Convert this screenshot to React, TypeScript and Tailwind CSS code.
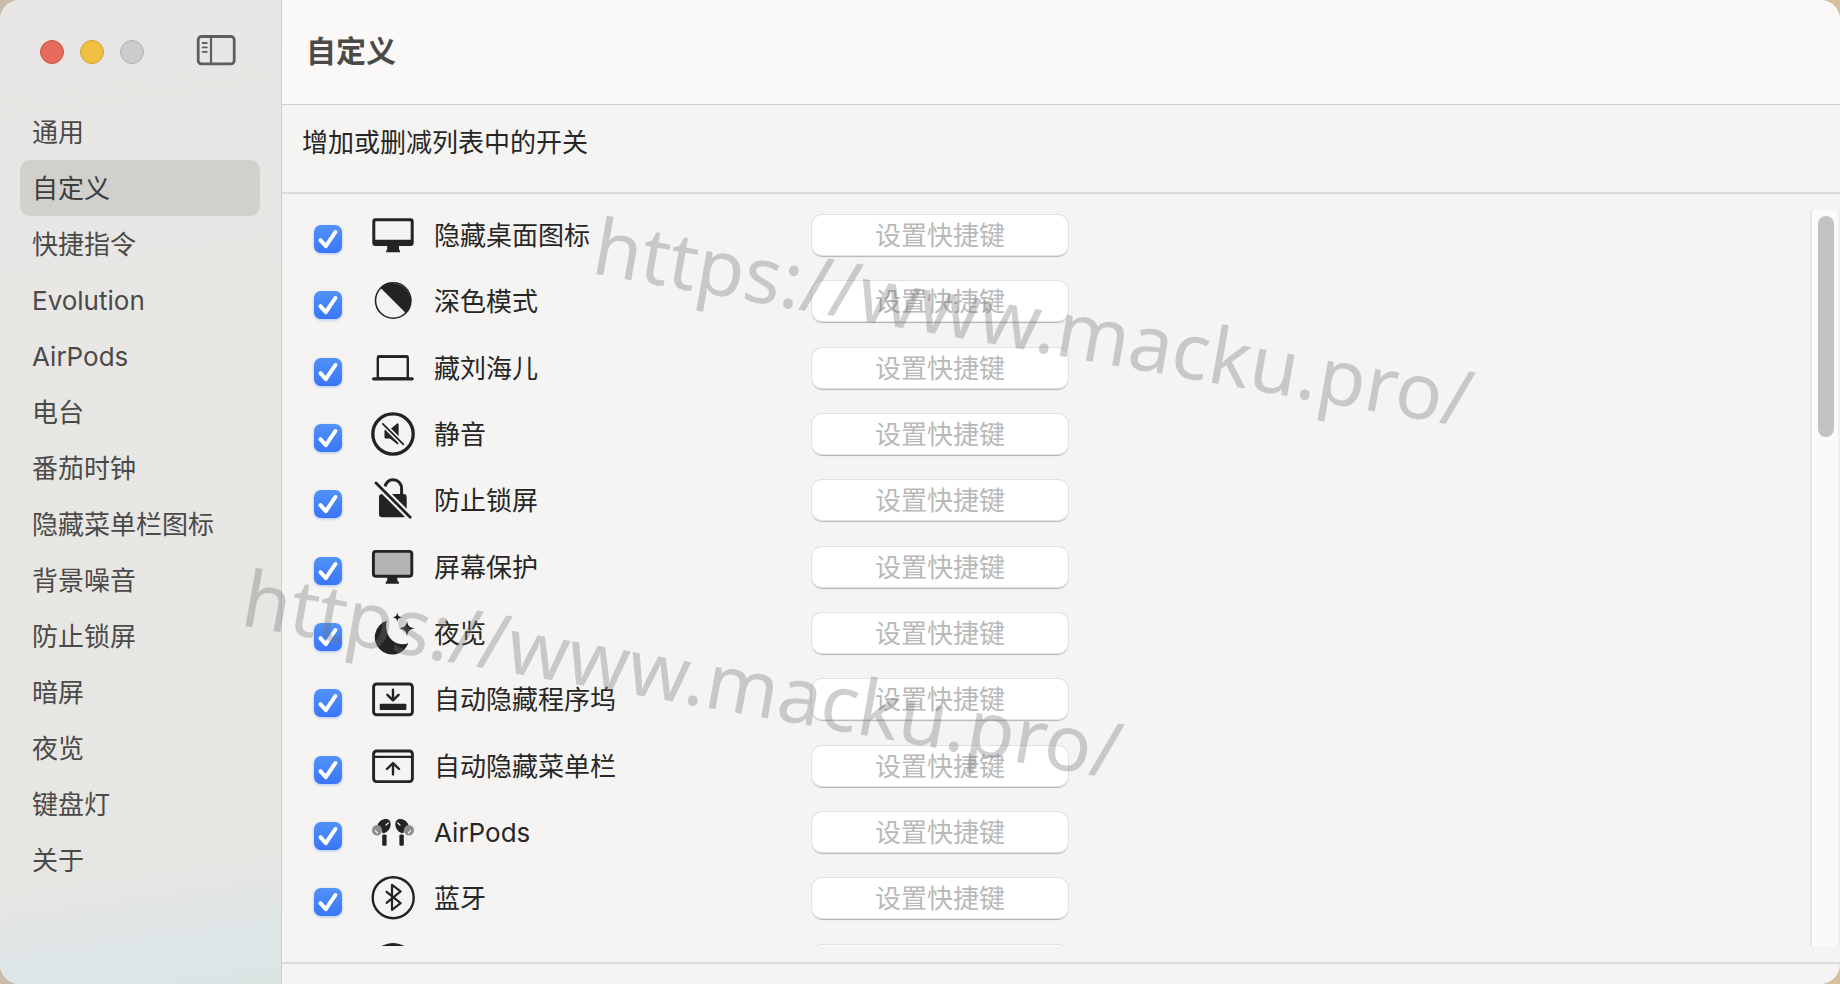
import React, { useState } from 'react';

interface SwitchRow {
  id: string;
  name: string;
  icon: React.FC;
}

const INK = '#232322';
const PAPER = '#f5f4f2';

const Glyph: React.FC<{ children: React.ReactNode }> = ({ children }) => (
  <svg viewBox="0 0 44 44" width={44} height={44} fill="none" className="shrink-0" aria-hidden="true">
    {children}
  </svg>
);

const DesktopIcon: React.FC = () => (
  <Glyph>
    <path
      fill={INK}
      fillRule="evenodd"
      d="M4.5 5.3h35a3.2 3.2 0 0 1 3.2 3.2v21.3a3.2 3.2 0 0 1-3.2 3.2H28v3.6l1 1.2v1.5H15.2v-1.5l1-1.2V33H4.5a3.2 3.2 0 0 1-3.2-3.2V8.5a3.2 3.2 0 0 1 3.2-3.2zM5.2 8.2a.9.9 0 0 0-.9.9v17.6h35.4V9.100a.9.9 0 0 0-.9-.9z"
    />
  </Glyph>
);

const DarkModeIcon: React.FC = () => (
  <Glyph>
    <circle cx="22.2" cy="21.5" r="17.7" stroke={INK} strokeWidth="1.6" />
    <path fill={INK} d="M9.2 8.6A18.4 18.4 0 0 1 35.2 34.500z" />
  </Glyph>
);

const LaptopIcon: React.FC = () => (
  <Glyph>
    <rect x="6.800" y="10.4" width="30" height="22" rx="2" stroke={INK} strokeWidth="2.4" />
    <path d="M7.500 10.600h28.600" stroke={INK} strokeWidth="2.800" strokeLinecap="round" />
    <rect x="1" y="31.2" width="41.800" height="3.2" rx="1.6" fill={INK} />
  </Glyph>
);

const MuteIcon: React.FC = () => (
  <Glyph>
    <circle cx="22" cy="22" r="20.2" stroke={INK} strokeWidth="3.3" />
    <path
      fill={INK}
      stroke={INK}
      strokeLinejoin="round"
      d="M14 18h5l7.300-6.200a.6.6 0 0 1 .8.6v18.800a.6.6 0 0 1-.8.6L19 26h-5z"
    />
    <path d="m11 11 22 22" stroke={PAPER} strokeWidth="5" />
    <path d="m11.800 11.800 20.600 20.600" stroke={INK} strokeWidth="1.800" strokeLinecap="round" />
  </Glyph>
);

const LockSlashIcon: React.FC = () => (
  <Glyph>
    <path d="M14 8.5C15.200 4.200 18 1.700 22 1.700c5 0 8.600 3.600 8.600 9V17" stroke={INK} strokeWidth="3" />
    <rect x="8" y="16" width="27.700" height="23.300" rx="3.200" fill={INK} />
    <path d="m4 4 37 37" stroke={PAPER} strokeWidth="7" />
    <path d="m5 5 34.200 34.200" stroke={INK} strokeWidth="2.800" strokeLinecap="round" />
  </Glyph>
);

const ScreenSaverIcon: React.FC = () => (
  <Glyph>
    <rect x="2.400" y="6.400" width="38.400" height="24.800" rx="2.400" fill="#b4b4b3" stroke={INK} strokeWidth="2.900" />
    <path fill={INK} d="M16.300 32h10v3.500l1.600 1.500v1.800H14.700V37l1.600-1.500z" />
  </Glyph>
);

const NightIcon: React.FC = () => (
  <Glyph>
    <path
      fill={INK}
      d="M15.700 9.800A17.300 17.300 0 1 0 37.400 32C33 34.200 27 33.600 22 30c-6.200-4.800-7.800-13-6.300-20.200z"
    />
    <path fill={INK} d="M26.300 1.300c.5 3.500 1.400 4.500 5 5-3.600.5-4.500 1.500-5 5-.5-3.500-1.400-4.500-5-5 3.600-.5 4.500-1.500 5-5z" />
    <path fill={INK} d="M36 9.500c.8 5.800 2.300 7 8 7.900-5.700.9-7.200 2.200-8 8-.8-5.800-2.300-7.100-8-8 5.700-.9 7.200-2.100 8-7.900z" />
  </Glyph>
);

const DockIcon: React.FC = () => (
  <Glyph>
    <rect x="2.600" y="7" width="38.800" height="30.800" rx="3" stroke={INK} strokeWidth="2.900" />
    <rect x="8.700" y="26.700" width="26.700" height="6.200" rx="1" fill={INK} />
    <path
      d="M22 12.600v10.600M16.400 17.800l5.600 5.600 5.600-5.600"
      stroke={INK}
      strokeWidth="2.400"
      strokeLinecap="round"
      strokeLinejoin="round"
    />
  </Glyph>
);

const MenuBarIcon: React.FC = () => (
  <Glyph>
    <rect x="2.600" y="7" width="38.800" height="30.600" rx="3" stroke={INK} strokeWidth="2.900" />
    <path d="M3 12.800h38" stroke={INK} strokeWidth="2.200" />
    <path
      d="M22 30.400V19.200M16 25l6-6 6 6"
      stroke={INK}
      strokeWidth="2.400"
      strokeLinecap="round"
      strokeLinejoin="round"
    />
  </Glyph>
);

const Bud: React.FC = () => (
  <>
    <path
      fill={INK}
      d="M6.500 15C8 11 11.500 9 15 9c3.200 0 5 2.400 4.600 6-.5 4.500-3.600 8.200-8 8.200-.6-4-2.200-6.600-5.100-8.200z"
    />
    <rect x="11.200" y="24.500" width="4.400" height="11.300" rx="1.300" fill={INK} />
    <ellipse cx="6" cy="20.300" rx="5" ry="5.200" fill="#8d8d8b" />
    <path d="m4.300 20.600 2.200 2.400" stroke={PAPER} strokeWidth="1.200" strokeLinecap="round" />
    <path d="m15 15 2.300-2" stroke={PAPER} strokeWidth="1.200" strokeLinecap="round" />
  </>
);

const AirPodsIcon: React.FC = () => (
  <Glyph>
    <Bud />
    <g transform="translate(44 0) scale(-1 1)">
      <Bud />
    </g>
  </Glyph>
);

const BluetoothIcon: React.FC = () => (
  <Glyph>
    <circle cx="22.200" cy="21.700" r="20.500" stroke={INK} strokeWidth="2.400" />
    <path
      d="m15.600 15.800 14 11.400-8.600 6.600V8.900l8.600 6.500-14 11.400"
      stroke={INK}
      strokeWidth="2.200"
      strokeLinecap="round"
      strokeLinejoin="round"
    />
  </Glyph>
);

const DiscIcon: React.FC = () => (
  <Glyph>
    <circle cx="22" cy="22" r="22" fill={INK} />
  </Glyph>
);

const sections = [
  '通用',
  '自定义',
  '快捷指令',
  'Evolution',
  'AirPods',
  '电台',
  '番茄时钟',
  '隐藏菜单栏图标',
  '背景噪音',
  '防止锁屏',
  '暗屏',
  '夜览',
  '键盘灯',
  '关于',
];

const switches: SwitchRow[] = [
  { id: 'desktop', name: '隐藏桌面图标', icon: DesktopIcon },
  { id: 'dark', name: '深色模式', icon: DarkModeIcon },
  { id: 'notch', name: '藏刘海儿', icon: LaptopIcon },
  { id: 'mute', name: '静音', icon: MuteIcon },
  { id: 'awake', name: '防止锁屏', icon: LockSlashIcon },
  { id: 'saver', name: '屏幕保护', icon: ScreenSaverIcon },
  { id: 'night', name: '夜览', icon: NightIcon },
  { id: 'dock', name: '自动隐藏程序坞', icon: DockIcon },
  { id: 'menubar', name: '自动隐藏菜单栏', icon: MenuBarIcon },
  { id: 'airpods', name: 'AirPods', icon: AirPodsIcon },
  { id: 'bluetooth', name: '蓝牙', icon: BluetoothIcon },
  { id: 'next', name: '', icon: DiscIcon },
];

const Sidebar: React.FC<{ active: string; onSelect: (name: string) => void }> = ({ active, onSelect }) => (
  <aside className="flex w-[282px] shrink-0 flex-col border-r border-[#cfcecc] bg-[#e8e7e5] bg-[linear-gradient(172deg,#e8e7e5_0%,#e8e6e3_86%,#dde5e6_95%,#dce4e4_100%)]">
    <div className="flex h-26 shrink-0 items-center pl-10">
      <div className="flex gap-4">
        <button type="button" aria-label="关闭" className="size-6 rounded-full border border-[#cf5244] bg-[#e76b5c]" />
        <button type="button" aria-label="最小化" className="size-6 rounded-full border border-[#d0a035] bg-[#f2bf45]" />
        <button type="button" aria-label="缩放" className="size-6 rounded-full border border-[#b2b1b0] bg-[#cdcccb]" />
      </div>
      <button type="button" aria-label="边栏" className="ml-13">
        <svg viewBox="0 0 40 34" width={40} height={34} fill="none" stroke="#5f5e5d" aria-hidden="true">
          <rect x="2.200" y="1.500" width="36" height="27.400" rx="3.200" strokeWidth="2.800" />
          <path d="M15 1.500V29" strokeWidth="2.200" />
          <path d="M6.600 8h4.200M6.600 12.400h4.200M6.600 16.800h4.200" strokeWidth="1.800" strokeLinecap="round" />
        </svg>
      </button>
    </div>
    <nav className="flex flex-col pr-[21px] pl-5">
      {sections.map((name) => (
        <a
          key={name}
          href="#"
          onClick={() => onSelect(name)}
          className={
            name === active
              ? 'flex h-14 items-center rounded-[10px] bg-[#d1d0cc] px-3 pt-0.5 text-[#3d3d3c]'
              : 'flex h-14 items-center rounded-[10px] px-3 pt-0.5 text-[#4a4a49]'
          }
        >
          {name}
        </a>
      ))}
    </nav>
  </aside>
);

const Row: React.FC<{ row: SwitchRow }> = ({ row }) => (
  <li className="flex items-start">
    <label className="flex h-[50px] w-[498px] items-center text-[#262625]">
      <span className="mt-2 mr-[29px] grid size-7 place-items-center">
        <input
          type="checkbox"
          defaultChecked
          className="peer col-start-1 row-start-1 size-7 appearance-none rounded-[7px] border border-[#c4c3c1] bg-white checked:border-0 checked:bg-linear-to-b checked:from-[#5292f9] checked:to-[#3a75f8] checked:shadow-[0_1px_3px_#3a75f866]"
        />
        <svg
          viewBox="0 0 28 28"
          width={28}
          height={28}
          fill="none"
          aria-hidden="true"
          className="pointer-events-none invisible col-start-1 row-start-1 peer-checked:visible"
        >
          <path
            d="m6.400 15.200 5.400 6L21.400 7"
            stroke="#fff"
            strokeWidth="4"
            strokeLinecap="round"
            strokeLinejoin="round"
          />
        </svg>
      </span>
      <row.icon />
      <span className="ml-[19px] pt-0.5">{row.name}</span>
    </label>
    <button
      type="button"
      className="mt-[5px] flex h-10 w-64 items-center justify-center rounded-[10px] bg-white pt-0.5 text-[#b9b9b8] shadow-[0_0_0_1px_#e3e2e0,0_2px_1px_#b5b4b2]"
    >
      设置快捷键
    </button>
  </li>
);

const Watermark: React.FC<{ className: string }> = ({ className }) => (
  <div
    aria-hidden="true"
    className={`pointer-events-none absolute origin-top-left rotate-10 font-['Noto_Sans','Open_Sans',sans-serif] text-[78px] leading-none whitespace-nowrap text-[#737373]/34 ${className}`}
  >
    https://www.macku.pro/
  </div>
);

export default function App() {
  const [active, setActive] = useState('自定义');

  return (
    <div className="relative h-screen overflow-hidden bg-[linear-gradient(90deg,#c9bcaa_0%,#d8bf9f_100%)] font-[Inter,'Noto_Sans_CJK_SC',sans-serif] text-[26px] leading-8">
      <div className="flex h-full overflow-hidden rounded-[20px] bg-[#f5f4f2]">
        <Sidebar active={active} onSelect={setActive} />
        <main className="flex min-w-0 flex-1 flex-col">
          <header className="flex h-[105px] shrink-0 items-center border-b border-[#d0cfcd] bg-[#faf9f7] pb-0.5 pl-6">
            <h1 className="text-[30px] font-bold text-[#4a4a49]">{active}</h1>
          </header>
          <p className="flex h-[89px] shrink-0 items-center border-b-2 border-[#dcdbd9] pb-3 pl-5 text-[#262625]">
            增加或删减列表中的开关
          </p>
          <div className="my-4 flex min-h-0 flex-1">
            <div className="min-w-0 flex-1 overflow-hidden pl-8">
              <ul className="grid h-[796px] auto-rows-fr">
                {switches.map((row) => (
                  <Row key={row.id} row={row} />
                ))}
              </ul>
            </div>
            {/* Scroll track */}
            <div className="w-[30px] shrink-0 border-r-2 border-l-2 border-r-[#eeeeed] border-l-[#e7e7e6] bg-[#fafafa] px-[6px] pt-[6px] pr-1">
              <div className="h-[221px] w-4 rounded-full bg-[#c2c2c2]" />
            </div>
          </div>
          <footer className="h-[22px] shrink-0 border-t-2 border-[#dcdbd9]" />
        </main>
      </div>
      <Watermark className="top-[205px] left-[602px]" />
      <Watermark className="top-[557px] left-[251px]" />
    </div>
  );
}
